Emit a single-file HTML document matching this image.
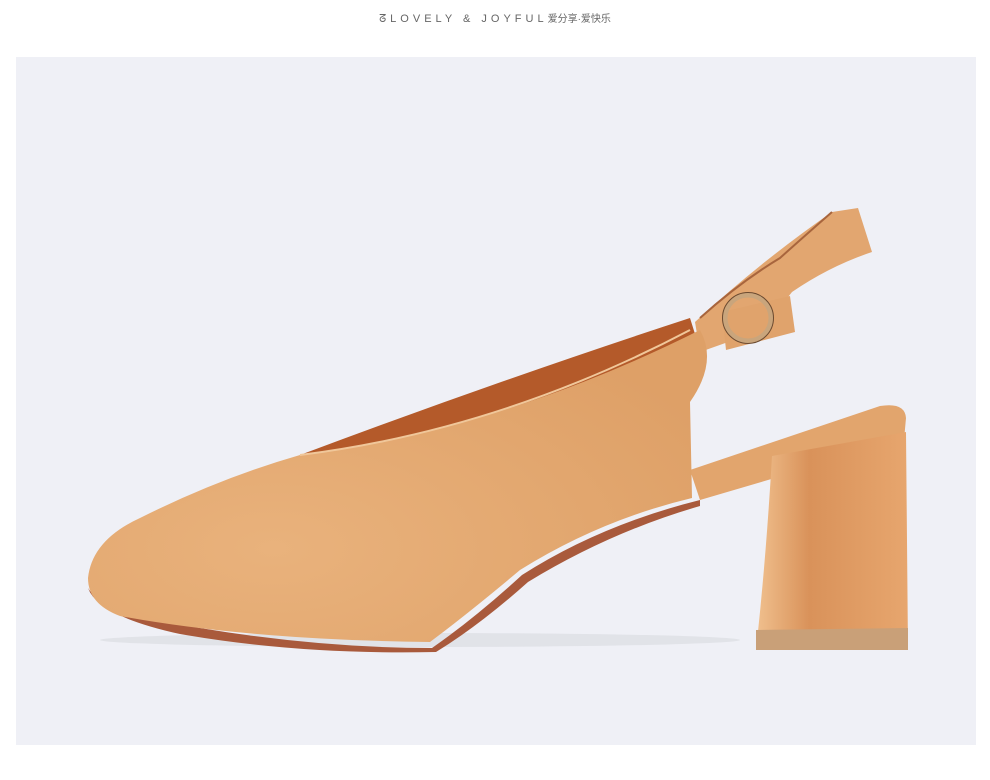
<!DOCTYPE html>
<html><head><meta charset="utf-8"><style>
html,body{margin:0;padding:0;background:#fff;width:990px;height:780px;overflow:hidden}
.hdr{position:absolute;top:10px;left:0;width:990px;text-align:center;font-family:"Liberation Sans","Noto Sans CJK SC",sans-serif;font-size:11px;color:#666;letter-spacing:4px}
.hdr span{letter-spacing:0;font-size:10px}
.panel{position:absolute;left:16px;top:57px;width:960px;height:688px;background:#eff0f6}
svg{position:absolute;left:0;top:0}
</style></head><body>
<div class="hdr">ᘔLOVELY &amp; JOYFUL<span>爱分享·爱快乐</span></div>
<div class="panel"></div>
<svg width="990" height="780" viewBox="0 0 990 780">
<defs>
<linearGradient id="heel" x1="0" x2="1"><stop offset="0" stop-color="#f0c08e"/><stop offset="0.35" stop-color="#d9925a"/><stop offset="1" stop-color="#e7a66e"/></linearGradient>
<radialGradient id="body" cx="0.3" cy="0.7" r="0.8"><stop offset="0" stop-color="#e9b27c"/><stop offset="1" stop-color="#dea067"/></radialGradient>
</defs>
<ellipse cx="420" cy="640" rx="320" ry="7" fill="#dcdde2" opacity="0.7"/>
<!-- heel seat -->
<path d="M690 470 L880 406 Q905 402 906 418 L904 440 L700 500 Z" fill="#e2a56d"/>
<!-- heel column -->
<path d="M772 456 L906 432 L908 650 L756 650 Q766 560 772 456 Z" fill="url(#heel)"/>
<path d="M756 630 L908 628 L908 650 L756 650 Z" fill="#c9a078"/>
<!-- strap -->
<path d="M695 322 Q760 262 832 212 L858 208 L872 252 Q830 266 792 292 L762 330 L700 352 Z" fill="#e2a670"/>
<path d="M700 318 Q740 282 780 258 Q800 240 832 212" fill="none" stroke="#a8653d" stroke-width="2"/>
<!-- lining -->
<path d="M300 455 Q500 380 690 318 L700 350 Q500 420 310 462 Z" fill="#b45a2a"/>
<!-- sole -->
<path d="M88 588 Q100 610 200 628 Q320 648 432 648 Q475 618 522 575 Q600 525 700 500 L700 506 Q610 532 528 582 Q480 625 436 652 Q300 655 180 634 Q98 616 88 588 Z" fill="#a95a3c"/>
<!-- upper body -->
<path d="M300 455 Q500 430 700 330 Q718 362 690 402 L692 498 Q600 520 520 570 Q470 612 430 642 Q250 640 120 616 Q88 604 88 578 Q92 540 140 518 Q220 478 300 455 Z" fill="url(#body)"/>
<path d="M300 455 Q500 430 690 330" fill="none" stroke="#f0c79a" stroke-width="2"/>
<!-- buckle -->
<path d="M722 312 L790 296 L795 332 L726 350 Z" fill="#e0a36c"/>
<circle cx="748" cy="318" r="23" fill="none" stroke="#c9a57c" stroke-width="5"/>
<circle cx="748" cy="318" r="25.5" fill="none" stroke="#6b4a30" stroke-width="1"/>
</svg>
</body></html>
